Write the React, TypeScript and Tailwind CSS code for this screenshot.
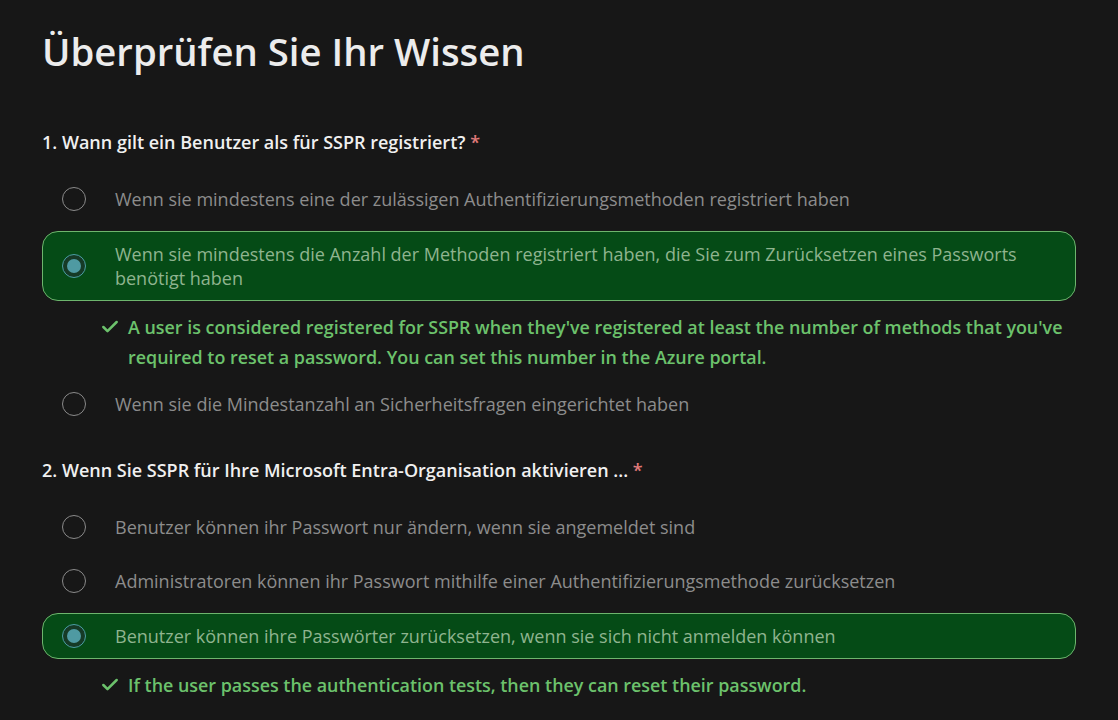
import { Check } from 'lucide-react'

type Option = { text: string; selected?: boolean; feedback?: string }
type Question = { title: string; options: Option[] }

const questions: Question[] = [
  {
    title: '1. Wann gilt ein Benutzer als für SSPR registriert?',
    options: [
      { text: 'Wenn sie mindestens eine der zulässigen Authentifizierungsmethoden registriert haben' },
      {
        text: 'Wenn sie mindestens die Anzahl der Methoden registriert haben, die Sie zum Zurücksetzen eines Passworts benötigt haben',
        selected: true,
        feedback:
          "A user is considered registered for SSPR when they've registered at least the number of methods that you've required to reset a password. You can set this number in the Azure portal.",
      },
      { text: 'Wenn sie die Mindestanzahl an Sicherheitsfragen eingerichtet haben' },
    ],
  },
  {
    title: '2. Wenn Sie SSPR für Ihre Microsoft Entra-Organisation aktivieren ...',
    options: [
      { text: 'Benutzer können ihr Passwort nur ändern, wenn sie angemeldet sind' },
      { text: 'Administratoren können ihr Passwort mithilfe einer Authentifizierungsmethode zurücksetzen' },
      {
        text: 'Benutzer können ihre Passwörter zurücksetzen, wenn sie sich nicht anmelden können',
        selected: true,
        feedback: 'If the user passes the authentication tests, then they can reset their password.',
      },
    ],
  },
]

function Radio({ selected }: { selected?: boolean }) {
  if (selected) {
    return (
      <span className="w-6 h-6 shrink-0 rounded-full border border-[#4b9ea3] bg-[#163a26] flex items-center justify-center">
        <span className="w-[14px] h-[14px] rounded-full bg-[#4f9aa2]" />
      </span>
    )
  }
  return <span className="w-6 h-6 shrink-0 rounded-full border border-[#8a8a8a]" />
}

function OptionRow({ option }: { option: Option }) {
  return (
    <div>
      <div
        className={
          option.selected
            ? 'flex items-center rounded-2xl border border-[#6db56d] bg-[#054b16] pl-[19px] pr-6 py-[10px]'
            : 'flex items-center border border-transparent pl-[19px] pr-6 py-[9px]'
        }
      >
        <Radio selected={option.selected} />
        <span
          className={
            option.selected
              ? 'ml-[29px] text-[18px] leading-6 text-[#8fb48f]'
              : 'ml-[29px] text-[18px] leading-6 text-[#8c8c8c]'
          }
        >
          {option.text}
        </span>
      </div>
      {option.feedback && (
        <div className="flex pl-[58px] pt-[11px]">
          <Check className="w-[20px] h-[20px] mt-[5px] shrink-0 text-[#6cc26c]" strokeWidth={3} />
          <p className="ml-[8px] text-[17.9px] leading-[30px] font-semibold text-[#6cc26c]">{option.feedback}</p>
        </div>
      )}
    </div>
  )
}

export default function App() {
  return (
    <div
      className="min-h-screen bg-[#171717] px-[42px] pt-[26px] text-[#e6e6e6]"
      style={{ fontFamily: '"Open Sans", "Noto Sans", sans-serif' }}
    >
      <h1 className="text-[38.3px] leading-[50px] font-semibold text-[#ececec]">Überprüfen Sie Ihr Wissen</h1>
      <div className="mt-[54px] flex flex-col gap-[32px] w-[1034px]">
        {questions.map((q) => (
          <section key={q.title}>
            <h2 className="text-[18px] leading-6 font-semibold text-[#f0f0f0]">
              {q.title} <span className="text-[#e07a7a]">*</span>
            </h2>
            <div className="mt-[23px] flex flex-col gap-[10px]">
              {q.options.map((o) => (
                <OptionRow key={o.text} option={o} />
              ))}
            </div>
          </section>
        ))}
      </div>
    </div>
  )
}
